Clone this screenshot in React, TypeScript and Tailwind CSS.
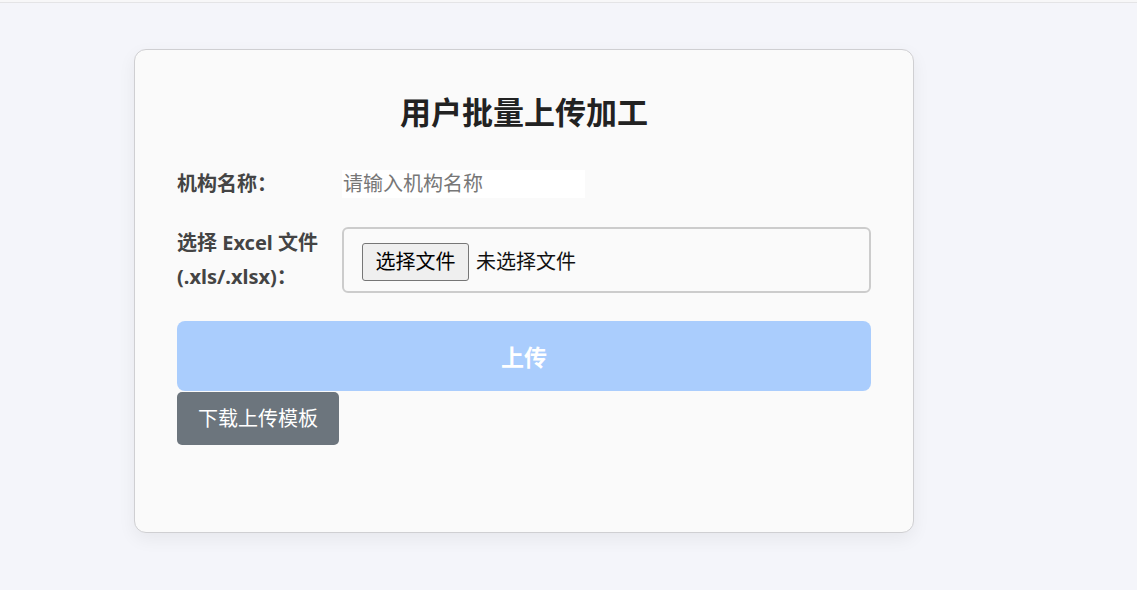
import React from "react";

const font = '"Noto Sans", "Noto Sans CJK SC", sans-serif';

export default function App() {
  return (
    <div
      className="min-h-[590px] w-full bg-[#f4f5fa] flex flex-col"
      style={{ fontFamily: font }}
    >
      {/* thin strip along the top of the window */}
      <div className="h-[3px] bg-[#f7f7f8] border-b border-[#e4e4e6]" />
      <div className="pl-[134px] pt-[46px]">
        <div className="w-[780px] h-[484px] bg-[#fafafa] border border-[#cfcfd2] rounded-[12px] shadow-[0_6px_18px_rgba(0,0,0,0.06)] px-[42px] pt-[40px] flex flex-col">
          <h2 className="text-[31px] leading-[45px] font-bold text-[#222] text-center">
            用户批量上传加工
          </h2>

          <div className="mt-[32px] flex items-center h-[34px]">
            <label className="w-[165px] shrink-0 text-[20px] leading-[34px] font-bold text-[#444]">
              机构名称：
            </label>
            <input
              type="text"
              placeholder="请输入机构名称"
              className="w-[243px] h-[28px] bg-white px-[1px] text-[20px] text-[#333] placeholder:text-[#777] outline-none"
            />
          </div>

          <div className="mt-[25px] flex items-center">
            <label className="w-[165px] shrink-0 text-[20px] leading-[34px] font-bold text-[#444]">
              选择 Excel 文件
              <br />
              (.xls/.xlsx)：
            </label>
            <div className="flex-1 h-[66px] border-2 border-[#cccccc] rounded-[6px] flex items-center pl-[18px] pt-[3px]">
              <button
                type="button"
                className="h-[38px] w-[107px] bg-[#efefef] border border-[#767676] rounded-[3px] text-[20px] text-black flex items-center justify-center"
              >
                选择文件
              </button>
              <span className="ml-[7px] text-[20px] text-[#111]">未选择文件</span>
            </div>
          </div>

          <button
            type="button"
            className="mt-[27px] w-full h-[70px] bg-[#aacdfd] rounded-[8px] text-white text-[23px] font-bold pt-[2px]"
          >
            上传
          </button>
          <div className="mt-[1px]">
            <button
              type="button"
              className="h-[53px] w-[162px] bg-[#6c757d] rounded-[5px] text-white text-[20px]"
            >
              下载上传模板
            </button>
          </div>
        </div>
      </div>
    </div>
  );
}
